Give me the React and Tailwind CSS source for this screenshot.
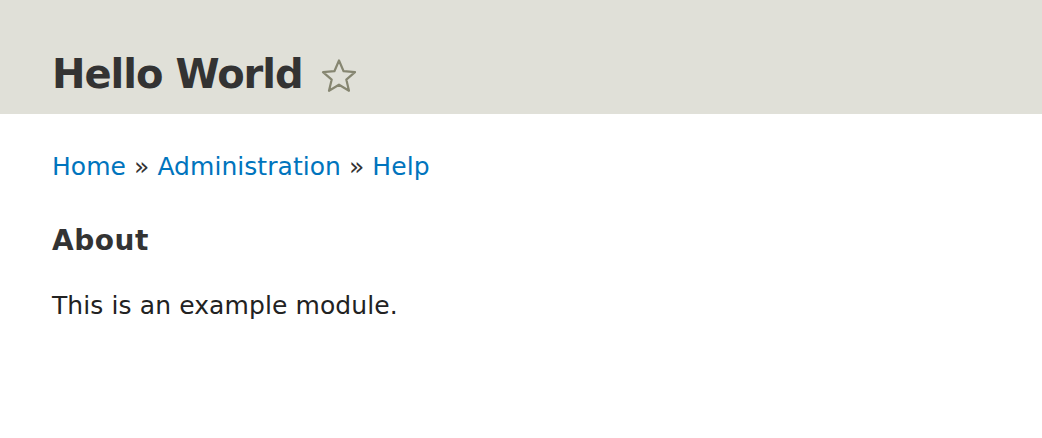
import React from 'react';

const StarIcon = () => (
  <svg width="38" height="36" viewBox="0 0 38 36" fill="none" className="ml-[17px] mt-[3px]">
    <path
      d="M19 2.5 L23.6 13.2 L35 14.1 L26.3 21.6 L29 32.8 L19 26.7 L9 32.8 L11.7 21.6 L3 14.1 L14.4 13.2 Z"
      stroke="#868671"
      strokeWidth="2.2"
      strokeLinejoin="round"
    />
  </svg>
);

export default function App() {
  return (
    <div className="min-h-screen bg-white font-['DejaVu_Sans',Verdana,sans-serif] text-[#333]">
      <header className="h-[114px] bg-[#e0e0d8] px-[52px] pt-[44px]">
        <div className="flex items-center">
          <h1 className="text-[40px] leading-[60px] font-bold tracking-[-1px] text-[#333]">Hello World</h1>
          <StarIcon />
        </div>
      </header>

      <main className="px-[52px] pt-[35px]">
        <nav className="text-[25px] leading-[36px] tracking-[0.05px] text-[#333]">
          <a href="#" className="text-[#0074bd]">Home</a>
          {' » '}
          <a href="#" className="text-[#0074bd]">Administration</a>
          {' » '}
          <a href="#" className="text-[#0074bd]">Help</a>
        </nav>

        <h2 className="mt-[36px] text-[28px] leading-[40px] font-bold tracking-[0.5px] text-[#333]">About</h2>
        <p className="mt-[27px] text-[25px] leading-[36px] tracking-[0.1px] text-[#222]">This is an example module.</p>
      </main>
    </div>
  );
}
